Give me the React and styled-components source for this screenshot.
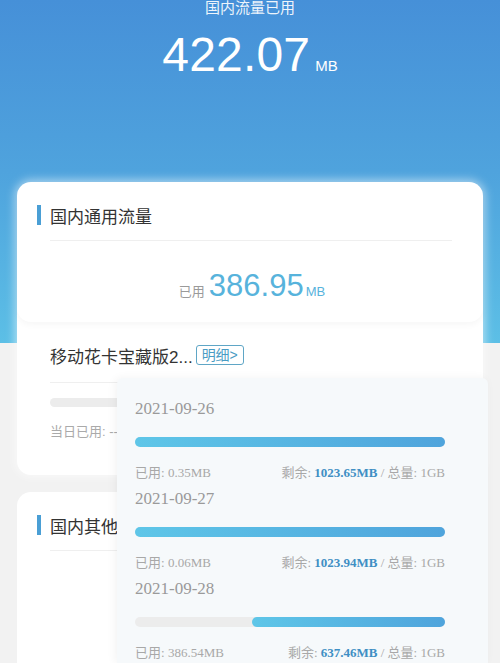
import React from "react";
import styled, { createGlobalStyle } from "styled-components";

const Global = createGlobalStyle`
  html, body { margin: 0; padding: 0; }
  body {
    background: #f2f2f2;
    font-family: "Liberation Sans", "Noto Sans CJK SC", sans-serif;
    width: 500px;
    height: 663px;
    overflow: hidden;
  }
`;

const Page = styled.div`
  position: relative;
  width: 500px;
  height: 663px;
  overflow: hidden;
  background: #f2f2f2;
`;

const Header = styled.div`
  height: 343px;
  background: linear-gradient(180deg, #4690d8 0%, #4fa3dd 50%, #5cbfe6 100%);
  display: flex;
  flex-direction: column;
  align-items: center;
  color: #fff;
`;

const HeaderTitle = styled.div`
  font-size: 15px;
  line-height: 15px;
  margin-top: 0;
  color: rgba(255, 255, 255, 0.92);
`;

const Total = styled.div`
  margin-top: 16px;
  display: flex;
  align-items: baseline;
  line-height: 48px;
`;

const TotalNum = styled.span`
  font-size: 48px;
  letter-spacing: 0.2px;
`;

const TotalUnit = styled.span`
  font-size: 15px;
  margin-left: 5px;
`;

const Content = styled.div`
  margin-top: -161px;
  padding: 0 17px;
  display: flex;
  flex-direction: column;
  gap: 17px;
`;

const Card = styled.div`
  background: #fff;
  border-radius: 14px;
  box-shadow: ${(p) => (p.$glow ? "0 0 10px 2px rgba(255,255,255,0.55)" : "none")};
  padding-bottom: ${(p) => p.$pb || 0}px;
  min-height: ${(p) => p.$minH || 0}px;
`;

const Top = styled.div`
  padding: 23px 31px ${(p) => (p.$flat ? 0 : 10)}px 33px;
  border-radius: 14px;
  box-shadow: ${(p) => (p.$flat ? "none" : "0 3px 6px rgba(0, 0, 0, 0.035)")};
`;

const TitleRow = styled.div`
  display: flex;
  align-items: center;
  height: 20px;
  margin-left: -13px;
`;

const TitleBar = styled.div`
  width: 4px;
  height: 20px;
  background: #4a9fd5;
  margin-right: 9px;
`;

const Title = styled.div`
  font-size: 17px;
  color: #333;
`;

const Divider = styled.div`
  height: 1px;
  background: #efefef;
  margin-top: ${(p) => p.$mt || 15}px;
`;

const Used = styled.div`
  margin-top: 25px;
  display: flex;
  justify-content: center;
  align-items: baseline;
  line-height: 40px;
  margin-right: -2px;
`;

const UsedLabel = styled.span`
  font-size: 13px;
  color: #9a9a9a;
  margin-right: 4px;
`;

const UsedNum = styled.span`
  font-size: 31px;
  color: #57b3dc;
`;

const UsedUnit = styled.span`
  font-size: 13px;
  color: #57b3dc;
  margin-left: 2px;
`;

const Body = styled.div`
  padding: 21px 31px 0 33px;
`;

const PlanRow = styled.div`
  display: flex;
  align-items: center;
  height: 24px;
`;

const PlanName = styled.span`
  font-size: 17px;
  color: #333;
`;

const Badge = styled.span`
  margin-left: 3px;
  height: 18px;
  line-height: 18px;
  padding: 0 5px;
  border: 1px solid #5fa6c6;
  border-radius: 3px;
  font-size: 14px;
  color: #4a9cc4;
`;

const GrayBar = styled.div`
  margin-top: 15px;
  height: 9px;
  border-radius: 5px;
  background: #ececec;
`;

const DayUsed = styled.div`
  margin-top: 15px;
  line-height: 20px;
  font-size: 13px;
  color: #aaa;
`;

const Popover = styled.div`
  position: absolute;
  top: 378px;
  left: 117px;
  width: 371px;
  bottom: 0;
  background: #f6f9fb;
  box-shadow: -2px 0 10px rgba(0, 0, 0, 0.05);
  border-radius: 6px 6px 0 0;
  padding: 19px 43px 0 18px;
  box-sizing: border-box;
  display: flex;
  flex-direction: column;
  gap: 4px;
  font-family: "Liberation Serif", "Noto Sans CJK SC", serif;
`;

const Item = styled.div`
  display: flex;
  flex-direction: column;
`;

const DateText = styled.div`
  font-size: 17px;
  line-height: 24px;
  color: #9a9a9a;
`;

const Track = styled.div`
  margin-top: 16px;
  height: 10px;
  border-radius: 5px;
  background: #ececec;
  display: flex;
  justify-content: flex-end;
`;

const Fill = styled.div`
  height: 10px;
  border-radius: 5px;
  background: linear-gradient(90deg, #5ec6e8 0%, #4fa4dc 100%);
`;

const Stats = styled.div`
  margin-top: 16px;
  line-height: 20px;
  font-size: 13px;
  color: #a8a8a8;
  display: flex;
  justify-content: space-between;
`;

const Strong = styled.b`
  color: #3f8fc4;
`;

const days = [
  { date: "2021-09-26", used: "0.35MB", left: "1023.65MB", pct: 99.97 },
  { date: "2021-09-27", used: "0.06MB", left: "1023.94MB", pct: 99.99 },
  { date: "2021-09-28", used: "386.54MB", left: "637.46MB", pct: 62.3 },
];

export default function App() {
  return (
    <Page>
      <Global />
      <Header>
        <HeaderTitle>国内流量已用</HeaderTitle>
        <Total>
          <TotalNum>422.07</TotalNum>
          <TotalUnit>MB</TotalUnit>
        </Total>
      </Header>
      <Content>
        <Card $glow $pb={33}>
          <Top>
            <TitleRow>
              <TitleBar />
              <Title>国内通用流量</Title>
            </TitleRow>
            <Divider />
            <Used>
              <UsedLabel>已用</UsedLabel>
              <UsedNum>386.95</UsedNum>
              <UsedUnit>MB</UsedUnit>
            </Used>
          </Top>
          <Body>
            <PlanRow>
              <PlanName>移动花卡宝藏版2...</PlanName>
              <Badge>明细&gt;</Badge>
            </PlanRow>
            <Divider />
            <GrayBar />
            <DayUsed>当日已用: --</DayUsed>
          </Body>
        </Card>
        <Card $minH={300}>
          <Top $flat>
            <TitleRow>
              <TitleBar />
              <Title>国内其他</Title>
            </TitleRow>
            <Divider />
          </Top>
        </Card>
      </Content>
      <Popover>
        {days.map((d) => (
          <Item key={d.date}>
            <DateText>{d.date}</DateText>
            <Track>
              <Fill style={{ width: `${d.pct}%` }} />
            </Track>
            <Stats>
              <span>已用: {d.used}</span>
              <span>
                剩余: <Strong>{d.left}</Strong> / 总量: 1GB
              </span>
            </Stats>
          </Item>
        ))}
      </Popover>
    </Page>
  );
}
